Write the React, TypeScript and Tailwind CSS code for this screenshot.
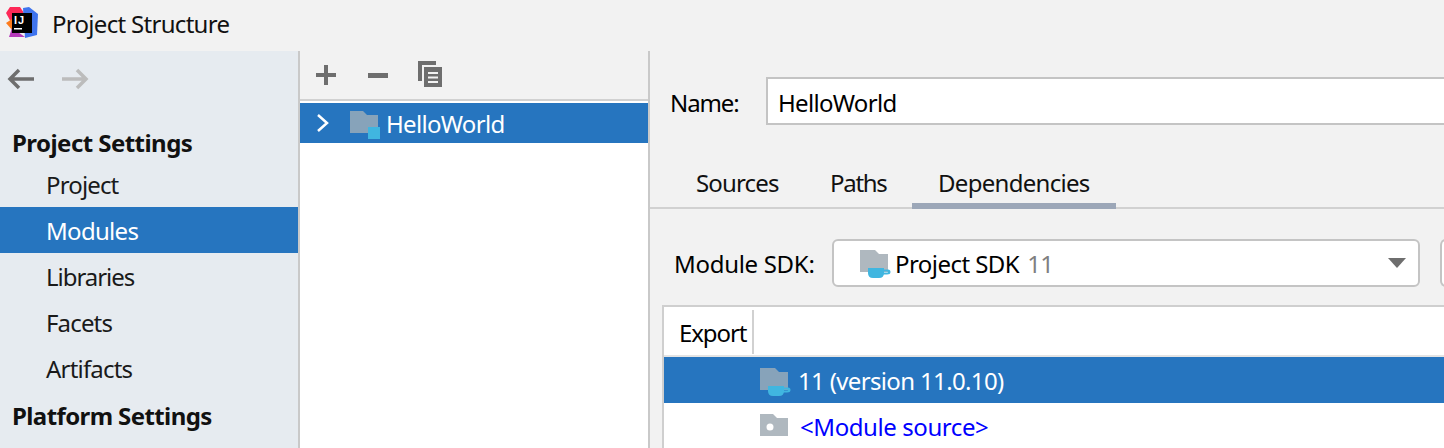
const font = { fontFamily: '"Noto Sans", sans-serif' };

function Logo() {
  return (
    <svg width="34" height="34" viewBox="0 0 34 34" className="shrink-0">
      <path d="M1 7 L5 1 L15 1 L19 7 L7 18Z" fill="#fe2857" />
      <path d="M1 17 L7 13 L8 25Z" fill="#fd7b1c" />
      <path d="M4 31 L7 22 L20 31 Z" fill="#b53aba" />
      <path d="M18 2 L24 1 L33 8 L32 29 L20 32Z" fill="#3f74ee" />
      <rect x="7" y="7" width="20" height="20" fill="#000" />
      <text x="9" y="17.500" fill="#fff" fontSize="11" letterSpacing="1" fontWeight="700" style={{ fontFamily: '"Liberation Sans", sans-serif' }}>IJ</text>
      <rect x="9" y="22" width="8" height="1.500" fill="#fff" />
    </svg>
  );
}

function CupFolder({ color = '#afb8bf', className = '' }: { color?: string; className?: string }) {
  return (
    <svg width="31" height="29" viewBox="0 0 31 29" className={`shrink-0 ${className}`}>
      <path d="M0 1 H15 L19 5 H28 V23 H0 Z" fill={color} />
      <path d="M8 19 H24 V24 Q24 29 19 29 H13 Q8 29 8 24 Z" fill="#40b6e0" />
      <path d="M24 20.500 H28 Q30.500 20.500 30.500 23 Q30.500 25.500 27 25.500 H23 V23.500 H27 Q28 23.500 28 23 Q28 22.500 27 22.500 H24 Z" fill="#40b6e0" />
    </svg>
  );
}

function SideItem({ label, active, className = '' }: { label: string; active?: boolean; className?: string }) {
  return (
    <div className={`h-[46px] pl-[46px] pt-[2px] flex items-center ${active ? 'bg-[#2675bf] text-white' : 'text-[#1a1a1a]'} ${className}`}>
      {label}
    </div>
  );
}

export default function App() {
  return (
    <div style={font} className="w-[1444px] h-[448px] overflow-hidden bg-[#f2f2f2] text-[24px] leading-none text-black flex flex-col tracking-[-0.7px]">
      <div className="h-[51px] shrink-0 flex items-center pl-[5px] gap-[13px] pb-[5px]">
        <Logo />
        <span className="text-[#111] pt-[2px]">Project Structure</span>
      </div>
      <div className="flex flex-1 min-h-0">
        <aside className="w-[300px] shrink-0 bg-[#e6ebf0] border-r-2 border-[#c9c9c9] flex flex-col">
          <div className="h-[56px] shrink-0 flex items-center pl-[7px] gap-[26px]">
            <svg width="28" height="22" viewBox="0 0 28 22" fill="none" stroke="#6e6e6e" strokeWidth="3.500">
              <path d="M27 11 H3 M12 2 L3 11 L12 20" />
            </svg>
            <svg width="28" height="22" viewBox="0 0 28 22" fill="none" stroke="#bcbcbc" strokeWidth="3.500">
              <path d="M1 11 H25 M16 2 L25 11 L16 20" />
            </svg>
          </div>
          <div className="h-[54px] shrink-0 pl-[12px] flex items-end pb-[6px] font-bold text-[#111] tracking-[-0.55px]">Project Settings</div>
          <SideItem label="Project" className="tracking-[-0.85px]" />
          <SideItem label="Modules" active />
          <SideItem label="Libraries" className="tracking-[-1.05px]" />
          <SideItem label="Facets" className="tracking-[-0.85px]" />
          <SideItem label="Artifacts" className="tracking-[-0.8px]" />
          <div className="h-[50px] shrink-0 pl-[12px] flex items-center font-bold text-[#111] tracking-[-0.6px]">Platform Settings</div>
        </aside>
        <section className="w-[350px] shrink-0 bg-white border-r-2 border-[#c9c9c9] flex flex-col">
          <div className="h-[50px] shrink-0 bg-[#f2f2f2] border-b-2 border-[#d1d1d1] flex items-center pl-[16px]">
            <svg width="20" height="20" viewBox="0 0 20 20" fill="#6e6e6e"><path d="M8 0 H12 V8 H20 V12 H12 V20 H8 V12 H0 V8 H8Z" /></svg>
            <svg width="20" height="20" viewBox="0 0 20 20" fill="#6e6e6e" className="ml-[32px]"><rect y="8" width="20" height="5" /></svg>
            <svg width="24" height="26" viewBox="0 0 24 26" fill="#6e6e6e" className="ml-[30px] -mt-[2px]">
              <path d="M0 0 H18 V4 H4 V20 H0Z" />
              <path fillRule="evenodd" d="M6 6 H24 V26 H6Z M10 11 V13 H20 V11Z M10 15.500 V17.500 H20 V15.500Z M10 20 V22 H20 V20Z" />
            </svg>
          </div>
          <div className="mt-[2px] h-[40px] shrink-0 bg-[#2675bf] text-white flex items-center pl-[15px]">
            <svg width="16" height="20" viewBox="0 0 16 20" fill="none" stroke="#fff" strokeWidth="2.500"><path d="M3 2 L12 10 L3 18" /></svg>
            <svg width="31" height="29" viewBox="0 0 31 29" className="ml-[19px] self-start mt-[7px] shrink-0">
              <path d="M0 1 H13 L17 5 H28 V23 H0 Z" fill="#87a3ba" />
              <rect x="18" y="17" width="12" height="12" fill="#40b6e0" />
            </svg>
            <span className="ml-[5px] pt-[2px]">HelloWorld</span>
          </div>
        </section>
        <main className="flex-1 min-w-0 flex flex-col">
          <div className="h-[74px] shrink-0 pt-[26px] pl-[20px] flex items-start">
            <div className="w-[96px] h-[48px] shrink-0 flex items-center pt-[4px] tracking-[-1.1px]">Name:</div>
            <div className="flex-1 h-[48px] bg-white border-y-2 border-l-2 border-[#c4c4c4] flex items-center pl-[10px] pt-[4px]">HelloWorld</div>
          </div>
          <div className="h-[84px] shrink-0 pt-[30px] flex items-start border-b-2 border-[#d1d1d1] pl-[20px]">
            <div className="flex h-[54px] text-[#111]">
              <div className="w-[108px] h-[52px] pl-[26px] pt-[16px] tracking-[-0.85px]">Sources</div>
              <div className="w-[134px] h-[52px] pl-[52px] pt-[16px] tracking-[-1.3px]">Paths</div>
              <div className="w-[204px] h-[54px] pt-[16px] pl-[26px] border-b-[6px] border-[#9ca7b8]">Dependencies</div>
            </div>
          </div>
          <div className="h-[96px] shrink-0 pl-[24px] flex items-start pt-[30px]">
            <div className="w-[158px] h-[48px] shrink-0 flex items-center pt-[2px] tracking-[-0.3px]">Module SDK:</div>
            <div className="w-[588px] h-[48px] shrink-0 rounded-[6px] bg-white border-2 border-[#c4c4c4] flex items-center pl-[26px] pr-[12px]">
              <CupFolder className="mt-[1px]" />
              <span className="ml-[4px] pt-[2px] tracking-[-0.55px]">Project SDK</span>
              <span className="ml-[8px] pt-[2px] text-[#808080]">11</span>
              <svg width="18" height="10" viewBox="0 0 18 10" className="ml-auto"><path d="M0 0 H18 L9 10Z" fill="#6e6e6e" /></svg>
            </div>
            <div className="ml-[20px] w-[40px] h-[48px] shrink-0 rounded-l-[6px] bg-white border-y-2 border-l-2 border-[#c4c4c4]" />
          </div>
          <div className="flex-1 ml-[12px] bg-white border-t-2 border-l-2 border-[#cfcfcf] flex flex-col min-h-0">
            <div className="h-[48px] shrink-0 pt-[2px] flex items-center">
              <div className="w-[90px] h-[44px] border-r-2 border-[#d1d1d1] flex items-center pl-[15px] pt-[2px] tracking-[-1.1px]">Export</div>
            </div>
            <div className="h-[2px] shrink-0 bg-[#e4e4e4]" />
            <div className="h-[46px] shrink-0 bg-[#2675bf] text-white flex items-center pl-[96px]">
              <CupFolder color="#87a3ba" className="mt-[3px]" />
              <span className="ml-[7px] pt-[2px] tracking-[-0.65px]">11 (version 11.0.10)</span>
            </div>
            <div className="h-[46px] shrink-0 flex items-center pl-[96px] text-[#0000ff]">
              <svg width="28" height="24" viewBox="0 0 28 24" className="shrink-0">
                <path fillRule="evenodd" d="M0 0 H13 L17 4 H28 V22 H0 Z M6.500 13 a3.500 3.500 0 1 0 7 0 a3.500 3.500 0 1 0 -7 0Z" fill="#afb8bf" />
              </svg>
              <span className="ml-[12px] pt-[2px] tracking-[-0.42px]">&lt;Module source&gt;</span>
            </div>
          </div>
        </main>
      </div>
    </div>
  );
}
